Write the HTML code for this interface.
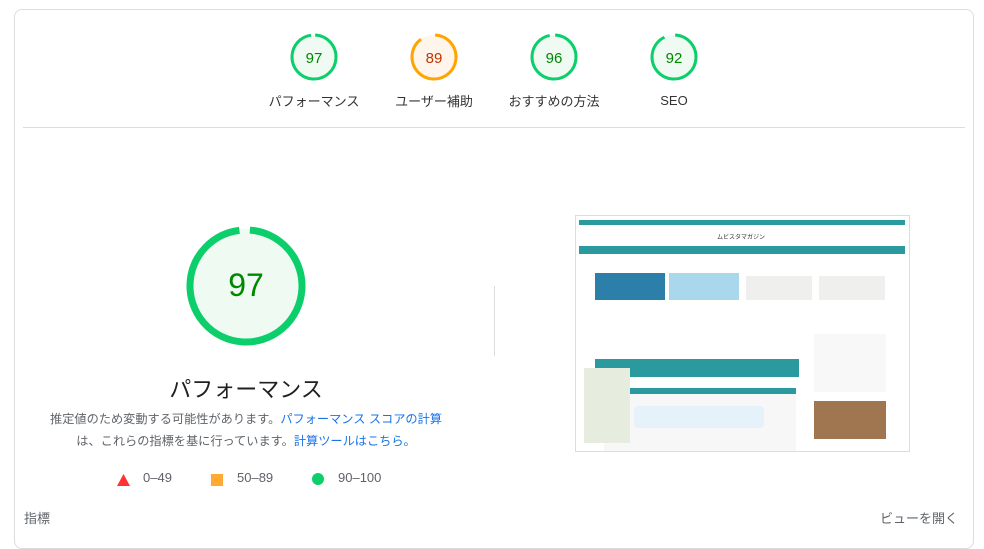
<!DOCTYPE html>
<html><head><meta charset="utf-8"><style>
*{margin:0;padding:0;box-sizing:border-box}
body{width:984px;height:535px;background:#fff;font-family:"Liberation Sans","Noto Sans CJK JP",sans-serif;position:relative;overflow:hidden;color:#212121}
.card{position:absolute;left:14px;top:9px;width:960px;height:540px;border:1px solid #dadce0;border-radius:8px}
.abs{position:absolute;white-space:nowrap}
.g{position:absolute;width:120px;text-align:center;font-size:13px;color:#333}
.g svg{display:block;margin:0 auto}
.lbl{margin-top:10px}
.num{position:absolute;top:2px;left:0;width:120px;height:48px;line-height:48px;font-size:15px}
a{color:#1a73e8;text-decoration:none}
</style></head><body>
<div class="card"></div>
<div class="abs" style="left:23px;top:127px;width:942px;height:1px;background:#dadce0"></div>
<div class="abs" style="left:494px;top:286px;width:1px;height:70px;background:#dadce0"></div>

<div class="g" style="left:254px;top:33px"><svg width="48" height="48"><circle cx="24" cy="24" r="22" fill="#eefaf2"/><circle cx="24" cy="24" r="22" fill="none" stroke="#0cce6b" stroke-width="3" stroke-dasharray="134 200" transform="rotate(-87 24 24)"/></svg><div class="num" style="color:#008800">97</div><div class="lbl">パフォーマンス</div></div>
<div class="g" style="left:374px;top:33px"><svg width="48" height="48"><circle cx="24" cy="24" r="22" fill="#fff5eb"/><circle cx="24" cy="24" r="22" fill="none" stroke="#ffa400" stroke-width="3" stroke-dasharray="123 200" transform="rotate(-87 24 24)"/></svg><div class="num" style="color:#c33300">89</div><div class="lbl">ユーザー補助</div></div>
<div class="g" style="left:494px;top:33px"><svg width="48" height="48"><circle cx="24" cy="24" r="22" fill="#eefaf2"/><circle cx="24" cy="24" r="22" fill="none" stroke="#0cce6b" stroke-width="3" stroke-dasharray="132.5 200" transform="rotate(-87 24 24)"/></svg><div class="num" style="color:#008800">96</div><div class="lbl">おすすめの方法</div></div>
<div class="g" style="left:614px;top:33px"><svg width="48" height="48"><circle cx="24" cy="24" r="22" fill="#eefaf2"/><circle cx="24" cy="24" r="22" fill="none" stroke="#0cce6b" stroke-width="3" stroke-dasharray="127 200" transform="rotate(-87 24 24)"/></svg><div class="num" style="color:#008800">92</div><div class="lbl" style="margin-top:12px">SEO</div></div>

<svg class="abs" style="left:186px;top:226px" width="120" height="120"><circle cx="60" cy="60" r="57" fill="#eefaf2"/><circle cx="60" cy="60" r="56" fill="none" stroke="#0cce6b" stroke-width="7" stroke-dasharray="341 400" transform="rotate(-86 60 60)"/></svg>
<div class="abs" style="left:186px;top:267px;width:120px;text-align:center;font-size:32px;color:#008800">97</div>
<div class="abs" style="left:86px;top:372px;width:320px;text-align:center;font-size:22px;color:#212121">パフォーマンス</div>
<div class="abs" style="left:30px;top:408px;width:432px;text-align:center;font-size:12.2px;line-height:22px;color:#5f6368">推定値のため変動する可能性があります。<a>パフォーマンス スコアの計算</a><br>は、これらの指標を基に行っています。<a>計算ツールはこちら。</a></div>
<div class="abs" style="left:0;top:470px;font-size:13px;color:#5f6368">
<svg class="abs" style="left:117px;top:4px" width="13" height="12"><polygon points="6.5,0 13,12 0,12" fill="#ff3333"/></svg><span class="abs" style="left:143px;top:0">0–49</span>
<div class="abs" style="left:211px;top:4px;width:12px;height:12px;background:#ffaa33"></div><span class="abs" style="left:237px;top:0">50–89</span>
<div class="abs" style="left:312px;top:3px;width:12px;height:12px;border-radius:50%;background:#0cce6b"></div><span class="abs" style="left:338px;top:0">90–100</span>
</div>
<div class="abs" style="left:24px;top:508px;font-size:13px;color:#5f6368">指標</div>
<div class="abs" style="left:880px;top:508px;font-size:13px;color:#5f6368">ビューを開く</div>

<div class="abs" style="left:575px;top:215px;width:335px;height:237px;border:1px solid #dadce0;background:#fff;overflow:hidden">
<div class="abs" style="left:3px;top:4px;width:326px;height:5px;background:#2a9a9e"></div>
<div class="abs" style="left:0;top:16px;width:330px;text-align:center;font-size:6px;color:#333">ムビスタマガジン</div>
<div class="abs" style="left:3px;top:30px;width:326px;height:8px;background:#2a9a9e"></div>
<div class="abs" style="left:19px;top:57px;width:70px;height:27px;background:#2b7fa8"></div>
<div class="abs" style="left:93px;top:57px;width:70px;height:27px;background:#a9d7ec"></div>
<div class="abs" style="left:170px;top:60px;width:66px;height:24px;background:#efefed"></div>
<div class="abs" style="left:243px;top:60px;width:66px;height:24px;background:#efefed"></div>
<div class="abs" style="left:19px;top:143px;width:204px;height:18px;background:#2a9a9e"></div>
<div class="abs" style="left:28px;top:172px;width:192px;height:6px;background:#2a9a9e"></div>
<div class="abs" style="left:28px;top:178px;width:192px;height:60px;background:#f7f7f7"></div>
<div class="abs" style="left:58px;top:190px;width:130px;height:22px;background:#e5f2fa;border-radius:4px"></div>
<div class="abs" style="left:8px;top:152px;width:46px;height:75px;background:#e6ecde"></div>
<div class="abs" style="left:238px;top:118px;width:72px;height:58px;background:#f8f8f8"></div>
<div class="abs" style="left:238px;top:185px;width:72px;height:38px;background:#a07650"></div>
</div>
</body></html>
